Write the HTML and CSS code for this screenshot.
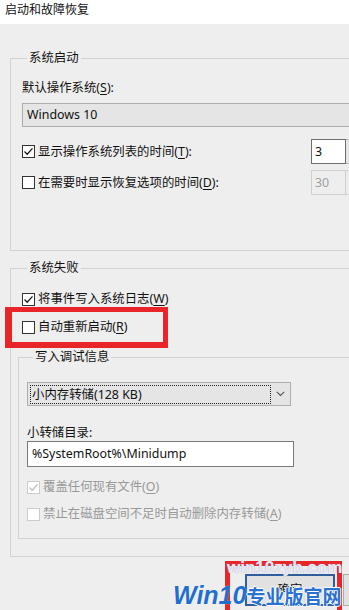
FILE: index.html
```html
<!DOCTYPE html>
<html lang="zh-CN">
<head>
<meta charset="utf-8">
<title>启动和故障恢复</title>
<link rel="stylesheet" href="styles.css">
</head>
<body>
<div class="page">
  <div class="titlebar">启动和故障恢复</div>
  <div class="content">
    <fieldset class="group g1">
      <legend>系统启动</legend>
      <div class="label l-os">默认操作系统(<u>S</u>):</div>
      <div class="combo c-os"><span>Windows 10</span></div>
      <div class="spin-row r1">
        <div class="check">
          <span class="box"><svg width="11" height="11" viewBox="0 0 11 11"><path d="M1.5 5.5 L4.2 8.2 L9.5 2.4" fill="none" stroke="#1a1a1a" stroke-width="1.3"/></svg></span>
          <span class="text">显示操作系统列表的时间(<u>T</u>):</span>
        </div>
        <div class="spin"><span class="spin-val">3</span><span class="spin-btn"></span></div>
      </div>
      <div class="spin-row r2">
        <div class="check">
          <span class="box"></span>
          <span class="text">在需要时显示恢复选项的时间(<u>D</u>):</span>
        </div>
        <div class="spin off"><span class="spin-val">30</span><span class="spin-btn"></span></div>
      </div>
    </fieldset>

    <fieldset class="group g2">
      <legend>系统失败</legend>
      <div class="check r-w">
        <span class="box"><svg width="11" height="11" viewBox="0 0 11 11"><path d="M1.5 5.5 L4.2 8.2 L9.5 2.4" fill="none" stroke="#1a1a1a" stroke-width="1.3"/></svg></span>
        <span class="text">将事件写入系统日志(<u>W</u>)</span>
      </div>
      <div class="check r-r">
        <span class="box"></span>
        <span class="text">自动重新启动(<u>R</u>)</span>
      </div>

      <fieldset class="group g3">
        <legend>写入调试信息</legend>
        <div class="combo c-dump">
          <span class="focus">小内存转储(128 KB)</span>
          <span class="arrow"><svg width="9" height="6" viewBox="0 0 9 6"><path d="M0.8 0.8 L4.5 4.5 L8.2 0.8" fill="none" stroke="#555" stroke-width="1.1"/></svg></span>
        </div>
        <div class="label l-dir">小转储目录:</div>
        <div class="input">%SystemRoot%\Minidump</div>
        <div class="check off r-o">
          <span class="box"><svg width="11" height="11" viewBox="0 0 11 11"><path d="M1.5 5.5 L4.2 8.2 L9.5 2.4" fill="none" stroke="#bdbdbd" stroke-width="1.3"/></svg></span>
          <span class="text">覆盖任何现有文件(<u>O</u>)</span>
        </div>
        <div class="check off r-a">
          <span class="box"></span>
          <span class="text">禁止在磁盘空间不足时自动删除内存转储(<u>A</u>)</span>
        </div>
      </fieldset>
    </fieldset>

    <div class="buttons">
      <button class="btn default">确定</button>
      <button class="btn" aria-label="取消"></button>
    </div>
  </div>

  <div class="redbox rb1"></div>
  <div class="redbox rb2"></div>
  <div class="wm-url">win10zyb.com</div>
  <div class="wm-brand"><span class="wm-win">Win10</span><span class="wm-cn">专业版官网</span></div>
</div>
</body>
</html>
```

FILE: styles.css
```css
* { box-sizing: border-box; }
html, body { margin: 0; padding: 0; }
body {
  width: 349px;
  height: 610px;
  overflow: hidden;
  background: #eeeeee;
  font-family: "Noto Sans", "Noto Sans CJK SC", sans-serif;
  font-size: 12.4px;
  line-height: 16px;
  color: #111111;
}
u { text-decoration-thickness: 1px; text-underline-offset: 2px; }
.page { position: relative; width: 349px; height: 610px; overflow: hidden; }

.titlebar {
  height: 24px;
  background: #ffffff;
  padding: 2px 0 0 5px;
  font-size: 12px;
  white-space: nowrap;
}

.content { padding: 26px 0 0 10px; }

.group {
  margin: 0;
  padding: 0;
  border: 1px solid #d2d2d2;
  min-width: 0;
}
.group legend {
  padding: 0 2px;
  margin-left: 5px;
  line-height: 16px;
}

.g1 { width: 370px; padding: 0 0 55px 11px; }
.l-os { margin-top: 14px; }
.c-os { margin-top: 7px; width: 340px; }

.combo {
  height: 24px;
  background: #e5e5e5;
  border: 1px solid #adadad;
  display: flex;
  align-items: center;
  padding-left: 4px;
  white-space: nowrap;
}

.spin-row { display: flex; align-items: center; height: 25px; }
.r1 { margin-top: 12px; }
.r2 { margin-top: 6px; }
.spin-row .check { width: 289px; }

.check { display: flex; align-items: center; gap: 3px; height: 16px; white-space: nowrap; }
.check .box {
  flex: none;
  width: 13px;
  height: 13px;
  border: 1px solid #333333;
  background: #ffffff;
  display: flex;
  align-items: center;
  justify-content: center;
}
.check.off { color: #999999; }
.check.off .box { border-color: #cccccc; }

.spin { display: flex; height: 25px; }
.spin-val {
  width: 35px;
  height: 25px;
  border: 1px solid #6e6e6e;
  background: #ffffff;
  padding-left: 3px;
  line-height: 23px;
}
.spin-btn {
  width: 17px;
  height: 25px;
  border: 1px solid #b8b8b8;
  border-left: none;
  background: #e6e6e6;
}
.spin.off .spin-val { border-color: #cfcfcf; background: #eeeeee; color: #a0a0a0; }
.spin.off .spin-btn { border-color: #d6d6d6; background: #ececec; }

.g2 { width: 370px; margin-top: 9px; padding: 0 0 17px 11px; }
.r-w { margin-top: 15px; }
.r-r { margin-top: 12px; }

.g3 { margin-top: 14px; margin-left: -4px; width: 360px; padding: 0 0 16px 8px; }
.g3 legend { margin-left: 6px; }

.c-dump { margin-top: 17px; width: 264px; padding-left: 2px; }
.c-dump .focus {
  width: 241px;
  height: 19px;
  border: 1px dotted #222222;
  padding-left: 1px;
  line-height: 17px;
}
.c-dump .arrow {
  flex: 1;
  display: flex;
  justify-content: center;
  align-items: center;
}

.l-dir { margin-top: 19px; }
.input {
  width: 267px;
  height: 26px;
  border: 1px solid #7a7a7a;
  background: #ffffff;
  padding-left: 4px;
  line-height: 24px;
  white-space: nowrap;
}
.r-o { margin-top: 12px; }
.r-a { margin-top: 11px; }

.buttons { display: flex; gap: 8px; margin: 17px 0 0 235px; }
.btn {
  flex: none;
  width: 90px;
  height: 32px;
  background: #e1e1e1;
  border: 1px solid #adadad;
  font: inherit;
  color: #111111;
  padding: 0;
}
.btn.default { border: 2px solid #2e5f9c; }

.redbox { position: absolute; border: 5px solid #e8262a; }
.rb1 { left: 5px; top: 307px; width: 163px; height: 41px; border-left-width: 7px; border-bottom-width: 6px; }
.rb2 { left: 225px; top: 561px; width: 117px; height: 60px; }

.wm-url {
  position: absolute;
  left: 227px;
  top: 558px;
  font-family: "Liberation Sans", sans-serif;
  font-weight: bold;
  font-size: 17px;
  line-height: 20px;
  color: #ece8f3;
  text-shadow: 0 0 1px #8e9dc8;
  white-space: nowrap;
}
.wm-brand {
  position: absolute;
  left: 173px;
  top: 580px;
  height: 30px;
  display: flex;
  align-items: baseline;
  white-space: nowrap;
}
.wm-win {
  font-family: "Liberation Sans", sans-serif;
  font-style: italic;
  font-weight: bold;
  font-size: 25px;
  line-height: 30px;
  color: #1f6fcf;
  text-shadow: 0 0 1px #ffffff;
}
.wm-cn {
  font-family: "Noto Sans CJK SC", sans-serif;
  font-weight: bold;
  font-size: 19px;
  line-height: 30px;
  color: #2a72d2;
  text-shadow: 1px 0 0 #fff, -1px 0 0 #fff, 0 1px 0 #fff, 0 -1px 0 #fff;
}
```
